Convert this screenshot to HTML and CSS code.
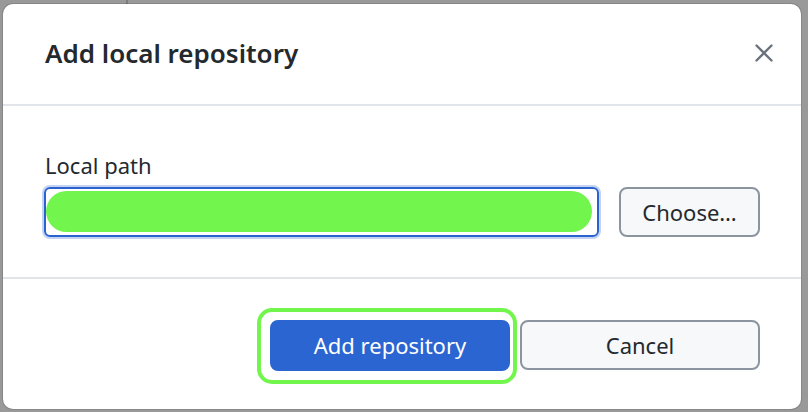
FILE: index.html
```html
<!DOCTYPE html>
<html lang="en">
<head>
<meta charset="utf-8">
<title>Add local repository</title>
<link rel="stylesheet" href="styles.css">
</head>
<body>
<div class="dialog">
  <header class="dialog-header">
    <h1 class="dialog-title">Add local repository</h1>
    <button class="close-btn" aria-label="Close">
      <svg width="18" height="18" viewBox="0 0 18 18"><path d="M1.5 1.5 L16.5 16.5 M16.5 1.5 L1.5 16.5" stroke="#6a737d" stroke-width="2.4" stroke-linecap="round" fill="none"/></svg>
    </button>
  </header>
  <section class="dialog-body">
    <label class="field-label">Local path</label>
    <div class="field-row">
      <div class="path-input"><span class="redact"></span></div>
      <button class="btn btn-choose">Choose…</button>
    </div>
  </section>
  <footer class="dialog-footer">
    <div class="ring-wrap">
      <button class="btn btn-primary">Add repository</button>
      <span class="ring"></span>
    </div>
    <button class="btn btn-cancel">Cancel</button>
  </footer>
</div>
</body>
</html>
```
FILE: styles.css
```css
* { box-sizing: border-box; }
html, body { margin: 0; padding: 0; }
body {
  width: 808px;
  height: 412px;
  overflow: hidden;
  background-color: #999999;
  background-image: linear-gradient(to right, transparent 126px, #7d7d7d 126px, #7d7d7d 128px, transparent 128px);
  background-size: 100% 5px;
  background-repeat: no-repeat;
  font-family: "Noto Sans", "Open Sans", sans-serif;
  color: #24292e;
}
.dialog {
  margin: 4px 0 0 3px;
  width: 798px;
  height: 405px;
  background: #ffffff;
  border-radius: 10px;
  box-shadow: 0 0 0 1px rgba(0,0,0,0.12);
  display: flex;
  flex-direction: column;
}
.dialog-header {
  height: 102px;
  border-bottom: 2px solid #e1e4e8;
  display: flex;
  align-items: center;
  justify-content: space-between;
  padding: 0 28px 2px 42px;
}
.dialog-title {
  margin: 0;
  font-size: 26px;
  font-weight: 600;
  line-height: 34px;
}
.close-btn {
  border: 0;
  background: transparent;
  padding: 0;
  width: 18px;
  height: 18px;
  display: flex;
}
.dialog-body {
  height: 173px;
  border-bottom: 2px solid #e1e4e8;
  padding: 44px 41px 0 41px;
}
.field-label {
  display: block;
  font-size: 22px;
  line-height: 30px;
  margin-left: 1px;
}
.field-row {
  margin-top: 7px;
  display: flex;
  gap: 20px;
  align-items: flex-start;
}
.path-input {
  width: 555px;
  height: 50px;
  border: 2px solid #2a62d0;
  border-radius: 6px;
  box-shadow: 0 0 0 2px rgba(42, 98, 208, 0.28);
  padding: 2px 5px 3px 0;
  display: flex;
}
.redact {
  flex: 1;
  background: #72f54c;
  border-radius: 21px;
}
.btn {
  font-family: inherit;
  font-size: 22px;
  color: #24292e;
  background: #f6f8fa;
  border: 2px solid #8c959f;
  border-radius: 8px;
  height: 50px;
  padding: 0 19px;
  line-height: 1;
}
.btn-choose {
  width: 141px;
  padding: 0;
}
.dialog-footer {
  flex: 1;
  display: flex;
  justify-content: flex-end;
  align-items: center;
  gap: 10px;
  padding: 2px 41px 0 0;
}
.ring-wrap {
  position: relative;
  display: flex;
}
.btn-primary {
  width: 240px;
  height: 51px;
  background: #2b65d1;
  border-color: #2b65d1;
  color: #ffffff;
}
.ring {
  position: absolute;
  left: -13px;
  top: -12px;
  right: -7px;
  bottom: -13px;
  border: 4px solid #72f54c;
  border-radius: 15px;
  pointer-events: none;
}
.btn-cancel {
  width: 240px;
}
```
